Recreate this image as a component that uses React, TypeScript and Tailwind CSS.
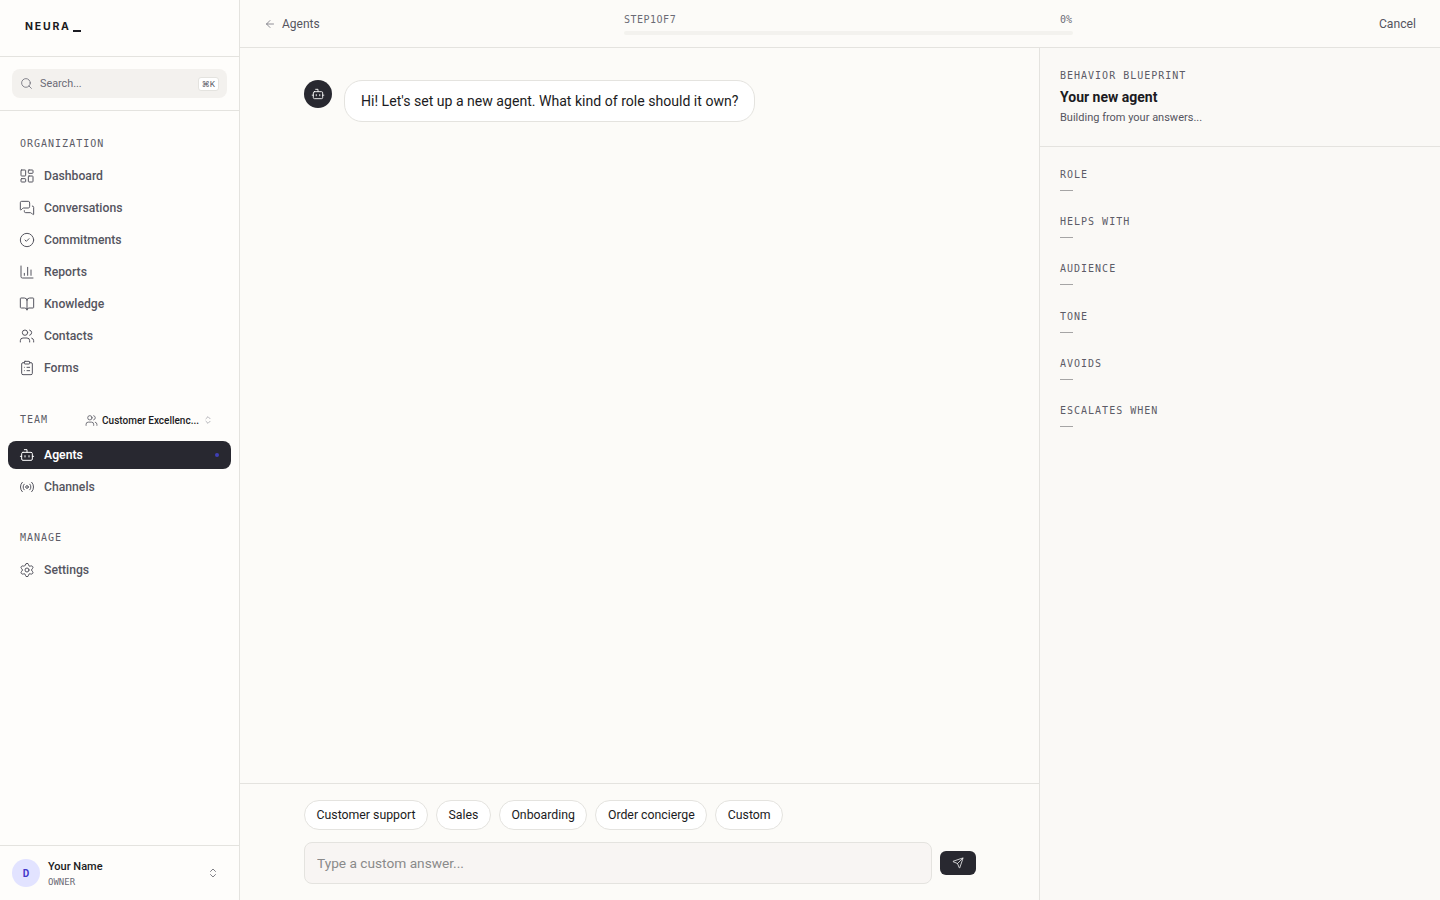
import type { ReactNode } from "react";
import {
  ArrowLeft,
  BookOpen,
  Bot,
  ChartColumn,
  ChevronsUpDown,
  CircleCheck,
  ClipboardList,
  LayoutDashboard,
  MessagesSquare,
  Radio,
  Search,
  Send,
  Settings,
  Users,
} from "lucide-react";

const mono = "font-['DejaVu_Sans_Mono',monospace]";

const orgItems = [
  { label: "Dashboard", icon: LayoutDashboard },
  { label: "Conversations", icon: MessagesSquare },
  { label: "Commitments", icon: CircleCheck },
  { label: "Reports", icon: ChartColumn },
  { label: "Knowledge", icon: BookOpen },
  { label: "Contacts", icon: Users },
  { label: "Forms", icon: ClipboardList },
];

const chips = ["Customer support", "Sales", "Onboarding", "Order concierge", "Custom"];
const fields = ["ROLE", "HELPS WITH", "AUDIENCE", "TONE", "AVOIDS", "ESCALATES WHEN"];

function SectionLabel({ children }: { children: ReactNode }) {
  return (
    <span className={`${mono} text-[10px] font-medium leading-[14px] tracking-[1px] text-[#5c5c67]`}>
      {children}
    </span>
  );
}

function NavItem({ label, icon: Icon }: { label: string; icon: typeof Search }) {
  return (
    <a className="flex h-[28px] items-center gap-[9px] rounded-lg px-[11px] text-[12.2px] font-medium text-[#55555f]">
      <Icon size={16} strokeWidth={1.5} />
      {label}
    </a>
  );
}

function Sidebar() {
  return (
    <aside className="flex h-full w-[240px] shrink-0 flex-col border-r border-[#e4e3df] bg-[#fefdfb]">
      <div className="flex h-[57px] shrink-0 items-center border-b border-[#e4e3df] pb-[3px] pl-[25px]">
        <span className="font-['Inter',sans-serif] text-[10.5px] font-bold tracking-[0.17em] text-[#1b1b22]">NEURA</span>
        <span className="mt-[8px] ml-[2px] h-[2px] w-[8px] bg-[#1b1b22]" />
      </div>

      <div className="flex h-[54px] shrink-0 items-center border-b border-[#e4e3df] px-3">
        <div className="flex h-[29px] w-full items-center gap-[7px] rounded-lg bg-[#f3f1ee] pr-2 pl-2">
          <Search size={13} strokeWidth={1.5} className="text-[#6b6b76]" />
          <span className="flex-1 pt-[1px] text-[10.8px] text-[#6b6b76]">Search...</span>
          <kbd className="flex h-[14px] w-[21px] items-center justify-center rounded-[3px] border border-[#e4e3df] bg-white font-['Inter',sans-serif] text-[8px] text-[#55555f]">
            ⌘K
          </kbd>
        </div>
      </div>

      <nav className="flex flex-1 flex-col px-2">
        <div className="mt-[26px] mb-[11px] flex h-[14px] items-center pl-3">
          <SectionLabel>ORGANIZATION</SectionLabel>
        </div>
        <div className="flex flex-col gap-1">
          {orgItems.map((item) => (
            <NavItem key={item.label} {...item} />
          ))}
        </div>

        <div className="mt-[31px] mb-[14px] flex h-[14px] items-center pr-[18px] pl-3">
          <SectionLabel>TEAM</SectionLabel>
          <div className="ml-auto flex items-center gap-1 text-[#1b1b22]">
            <Users size={13} strokeWidth={1.5} className="text-[#55555f]" />
            <span className="text-[10px] font-medium">Customer Excellenc...</span>
            <ChevronsUpDown size={10} strokeWidth={1.5} className="text-[#8a8a93]" />
          </div>
        </div>
        <div className="flex flex-col gap-1">
          <a className="flex h-[28px] items-center gap-[9px] rounded-lg bg-[#282830] px-[11px] text-[12.2px] font-semibold text-white">
            <Bot size={16} strokeWidth={1.5} />
            Agents
            <span className="mr-[1px] ml-auto size-1 rounded-full bg-[#3f3fb5]" />
          </a>
          <NavItem label="Channels" icon={Radio} />
        </div>

        <div className="mt-[30px] mb-[11px] flex h-[14px] items-center pl-3">
          <SectionLabel>MANAGE</SectionLabel>
        </div>
        <NavItem label="Settings" icon={Settings} />
      </nav>

      <div className="flex h-[55px] shrink-0 items-center border-t border-[#e4e3df] pr-5 pl-3">
        <div className="flex size-7 items-center justify-center rounded-full bg-[#e2e3ff] text-[10px] font-bold text-[#4338ca]">
          D
        </div>
        <div className="ml-2 flex flex-1 flex-col">
          <span className="text-[11px] leading-[15px] font-medium text-[#1b1b22]">Your Name</span>
          <span className={`${mono} mt-[2px] text-[9px] leading-[12px] text-[#6b6b76]`}>OWNER</span>
        </div>
        <ChevronsUpDown size={12} strokeWidth={1.5} className="text-[#55555f]" />
      </div>
    </aside>
  );
}

function Topbar() {
  return (
    <header className="flex h-[48px] shrink-0 items-center border-b border-[#e4e3df] pr-6 pl-6">
      <div className="flex w-[360px] items-center gap-[6px] text-[12px] text-[#55555f]">
        <ArrowLeft size={12} strokeWidth={1.5} className="text-[#6b6b76]" />
        <span className="pt-[1px]">Agents</span>
      </div>
      <div className="w-[449px] shrink-0 pt-[1px]">
        <div className={`${mono} flex justify-between text-[10px] leading-[14px] text-[#6b6b76]`}>
          <span className="tracking-[0.5px]">STEP1OF7</span>
          <span className="pr-[1px]">0%</span>
        </div>
        <div className="mt-[4px] h-1 rounded-full bg-[#f3f2ee]" />
      </div>
      <span className="ml-auto pt-[2px] text-[12.2px] text-[#55555f]">Cancel</span>
    </header>
  );
}

function Chat() {
  return (
    <section className="flex min-w-0 flex-1 flex-col border-r border-[#e4e3df]">
      <div className="flex flex-1 items-start gap-3 py-8 pr-[63px] pl-16">
        <div className="flex size-7 items-center justify-center rounded-full bg-[#282830] text-white">
          <Bot size={14} strokeWidth={1.5} />
        </div>
        <div className="rounded-[18px] border border-[#e4e3df] bg-white px-4 py-[10px] text-[14.08px] leading-[20px] text-[#1b1b22]">
          Hi! Let's set up a new agent. What kind of role should it own?
        </div>
      </div>
      <div className="h-[117px] shrink-0 border-t border-[#e4e3df] pt-4 pr-[63px] pl-16">
        <div className="flex gap-2">
          {chips.map((chip) => (
            <button
              key={chip}
              type="button"
              className="h-[30px] rounded-full border border-[#e4e3df] bg-white px-[11.5px] text-[12.3px] text-[#1b1b22]"
            >
              {chip}
            </button>
          ))}
        </div>
        <div className="mt-3 flex items-center gap-2">
          <input
            placeholder="Type a custom answer..."
            className="h-[42px] flex-1 rounded-lg border border-[#e4e3df] bg-[#f8f5f3] px-3 text-[13.7px] placeholder:text-[#8a8a8a]"
          />
          <button type="button" className="flex h-6 w-9 items-center justify-center rounded-md bg-[#282830] text-white">
            <Send size={12} strokeWidth={1.5} />
          </button>
        </div>
      </div>
    </section>
  );
}

function Blueprint() {
  return (
    <aside className="h-full w-[400px] shrink-0 bg-[#faf9f6]">
      <div className="h-[99px] border-b border-[#e4e3df] px-5 pt-[21px]">
        <div className={`${mono} text-[10px] leading-[14px] font-medium tracking-[1px] text-[#5c5c67]`}>
          BEHAVIOR BLUEPRINT
        </div>
        <div className="mt-[4px] text-[14px] leading-[20px] font-bold text-[#1b1b22]">Your new agent</div>
        <div className="mt-[3px] text-[11px] leading-[16px] text-[#55555f]">Building from your answers...</div>
      </div>
      <div className="flex flex-col gap-[15.2px] px-5 pt-[19px]">
        {fields.map((field) => (
          <div key={field} className="h-[32px]">
            <div className="leading-[14px]">
              <SectionLabel>{field}</SectionLabel>
            </div>
            <div className="mt-[2px] h-[16px] pt-[6px]">
              <div className="h-px w-[13px] bg-[#a5a5a5]" />
            </div>
          </div>
        ))}
      </div>
    </aside>
  );
}

export default function App() {
  return (
    <div className="flex h-[900px] w-[1440px] overflow-hidden bg-[#fcfbf8] font-['Roboto',sans-serif]">
      <Sidebar />
      <main className="flex min-w-0 flex-1 flex-col">
        <Topbar />
        <div className="flex min-h-0 flex-1">
          <Chat />
          <Blueprint />
        </div>
      </main>
    </div>
  );
}
